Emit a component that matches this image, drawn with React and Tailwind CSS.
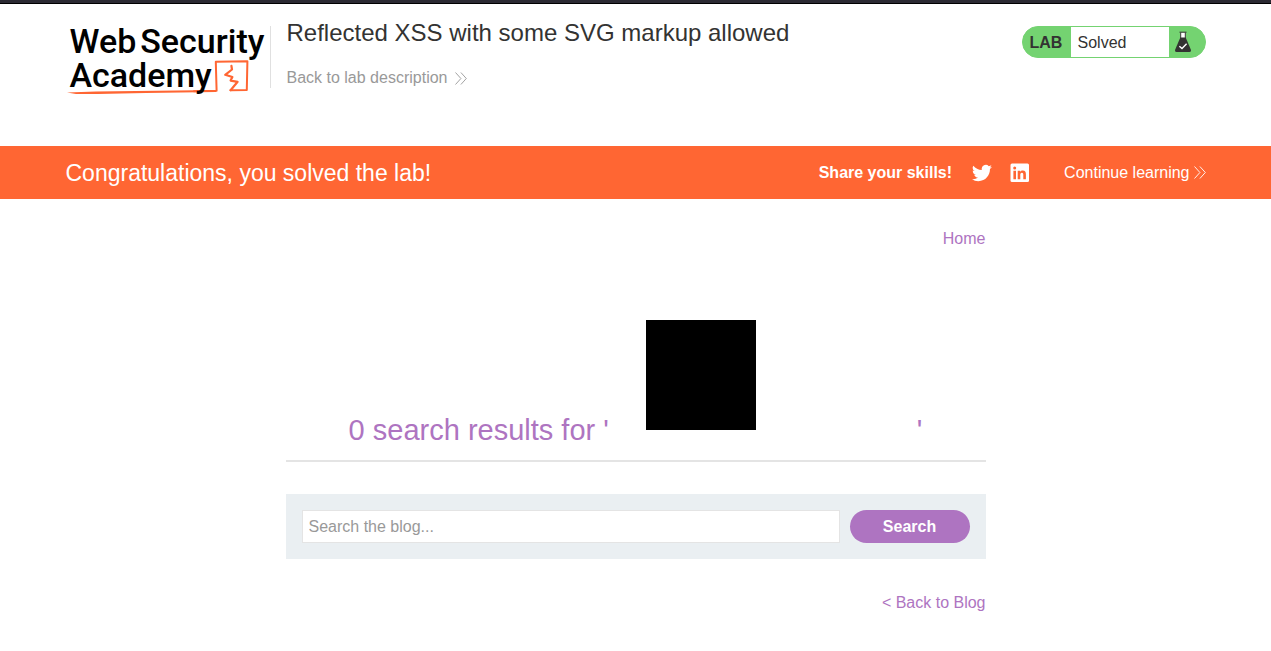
function DoubleChevron({ className }) {
  return (
    <svg viewBox="0 0 12 13" className={className} fill="none" stroke="currentColor" strokeWidth="0.9" aria-hidden="true">
      <path d="M0.5 0.5 L5.9 6.5 L0.5 12.5 M5.9 0.5 L11.3 6.5 L5.9 12.5" />
    </svg>
  );
}

function Logo() {
  return (
    <a
      href="#academy"
      aria-label="Web Security Academy"
      className="relative block h-[76px] w-[200px] pl-1 pt-1 text-[34px] leading-[34px] font-medium text-black font-[Roboto,sans-serif]"
    >
      <span className="flex gap-1 whitespace-nowrap">
        <span>Web</span>
        <span>Security</span>
      </span>
      <span className="relative z-10 block">Academy</span>
      <svg viewBox="0 0 200 76" className="absolute left-0 top-0 h-[76px] w-[200px]" fill="none" stroke="#ff6633" aria-hidden="true">
        <path d="M1 72.4 L30 71.6 L150 70 V72 L80 73 L32 74 L10 74 Z" fill="#ff6633" stroke="none" />
        <path d="M128 71.2 L150.6 70.8 L149.8 41.8 L181.4 41.2 L180.8 70 L164.4 70.2" strokeWidth="2" strokeLinejoin="round" strokeLinecap="round" />
        <path d="M165.4 45.8 L166 49.5 L159.2 54.8 L166.4 57 L164.6 60.6 L171.6 61.8 L164.6 70.2" strokeWidth="2.2" strokeLinejoin="round" strokeLinecap="round" />
      </svg>
    </a>
  );
}

function Flask() {
  return (
    <svg viewBox="0 0 18 22" className="h-[22px] w-[18px]" aria-hidden="true">
      <path d="M6.4 1.5 H11.6 V8 H6.4 Z" fill="#fff" />
      <path d="M5.5 1.2 H12.5 M6.7 1.5 V7 M11.3 1.5 V7" stroke="#333332" strokeWidth="1" />
      <path d="M6.3 6.5 H11.7 L17 19 Q17.4 21 15.5 21 H2.5 Q0.6 21 1 19 Z" fill="#333332" />
      <path d="M5.4 15.2 L8 17.6 L12.6 12.8" fill="none" stroke="#fff" strokeWidth="1.4" />
    </svg>
  );
}

export default function App() {
  return (
    <div className="min-h-screen bg-white text-base leading-6 text-[#333332] font-['Liberation_Sans',Arial,sans-serif]">
      <div className="h-1 border-b border-black bg-[#2b2a33]" />
      <header className="mx-auto flex h-[142px] max-w-[1140px] items-start justify-between">
        <div className="flex">
          <div className="pt-4">
            <Logo />
          </div>
          <div className="ml-1 mt-[22px] h-[62px] w-px bg-[#e0e0e0]" />
          <div className="ml-4 pt-[13px]">
            <h2 className="text-2xl leading-8">Reflected XSS with some SVG markup allowed</h2>
            <a href="#description" className="mt-[17px] flex items-center gap-2 text-[#999999]">
              Back to lab description
              <DoubleChevron className="h-[13px] w-3" />
            </a>
          </div>
        </div>
        <div className="mt-[22px] flex h-8 w-[184px] overflow-hidden rounded-full border border-[#74d371] bg-[#74d371]">
          <span className="flex w-12 items-center pl-[7px] pt-0.5 font-bold">LAB</span>
          <p className="flex flex-1 items-center bg-white pl-[7px] pt-px">Solved</p>
          <span className="flex w-9 items-center pl-[5px]">
            <Flask />
          </span>
        </div>
      </header>

      <section className="bg-[#ff6633] text-white">
        <div className="mx-auto flex h-[53px] max-w-[1140px] items-center justify-between">
          <h4 className="text-[23px] leading-8">Congratulations, you solved the lab!</h4>
          <div className="flex items-center">
            <span className="mr-5 font-bold">Share your skills!</span>
            <a href="#twitter" aria-label="Share on Twitter" className="mr-[18px]">
              <svg viewBox="0 0 24 24" className="size-5" fill="currentColor" aria-hidden="true">
                <path d="M23.95 4.57a10 10 0 01-2.82.77 4.96 4.96 0 002.16-2.72c-.95.56-2 .96-3.12 1.18a4.92 4.92 0 00-8.39 4.48C7.69 8.1 4.07 6.13 1.64 3.16a4.92 4.92 0 001.52 6.57 4.9 4.9 0 01-2.23-.61v.06a4.92 4.92 0 003.95 4.83 5 5 0 01-2.21.08 4.94 4.94 0 004.6 3.42A9.87 9.87 0 010 19.54a13.99 13.99 0 007.55 2.21c9.05 0 14-7.5 14-13.98 0-.21 0-.42-.02-.63a9.94 9.94 0 002.42-2.57z" />
              </svg>
            </a>
            <a href="#linkedin" aria-label="Share on LinkedIn" className="mr-[34px]">
              <svg viewBox="0 0 20 20" className="size-5" aria-hidden="true">
                <rect x="0.5" y="0.5" width="18.5" height="18.5" rx="1.5" fill="#fff" />
                <circle cx="4.7" cy="5.1" r="1.5" fill="#ff6633" />
                <path d="M3.4 7.8 H6 V16.2 H3.4 Z M7.7 7.8 H10.2 V9 C10.7 8.1 11.6 7.6 12.8 7.6 C15.2 7.6 15.9 9.2 15.9 11.5 V16.2 H13.3 V12 C13.3 10.8 13.2 9.8 11.9 9.8 C10.6 9.8 10.3 10.8 10.3 12 V16.2 H7.7 Z" fill="#ff6633" />
              </svg>
            </a>
            <a href="#learning" className="flex items-center gap-1">
              Continue learning
              <DoubleChevron className="h-[13px] w-3" />
            </a>
          </div>
        </div>
      </section>

      <main className="mx-auto max-w-[700px] text-[#ae74c1]">
        <nav className="flex justify-end pt-7">
          <a href="#home">Home</a>
        </nav>
        <section className="border-b-2 border-[#e4e4e4] pb-3.5 pt-[39px] text-center">
          <h1 className="text-[29px] leading-8">
            0 search results for '
            <svg width="300" height="150" className="inline-block align-baseline" aria-hidden="true">
              <rect x="37" y="30" width="110" height="110" fill="#000" />
            </svg>
            {" '"}
          </h1>
        </section>
        <form className="mt-8 flex gap-[10px] bg-[#eaeff2] p-4" onSubmit={(e) => e.preventDefault()}>
          <input
            type="text"
            aria-label="Search the blog"
            placeholder="Search the blog..."
            className="h-[33px] min-w-0 flex-1 border border-[#e4e4e4] bg-white px-1.5 text-[#333332] placeholder:text-[#999999]"
          />
          <button type="submit" className="h-[33px] w-[120px] rounded-full bg-[#ae74c1] font-bold text-white">
            Search
          </button>
        </form>
        <div className="flex justify-end pt-8">
          <a href="#blog">&lt; Back to Blog</a>
        </div>
      </main>
    </div>
  );
}
